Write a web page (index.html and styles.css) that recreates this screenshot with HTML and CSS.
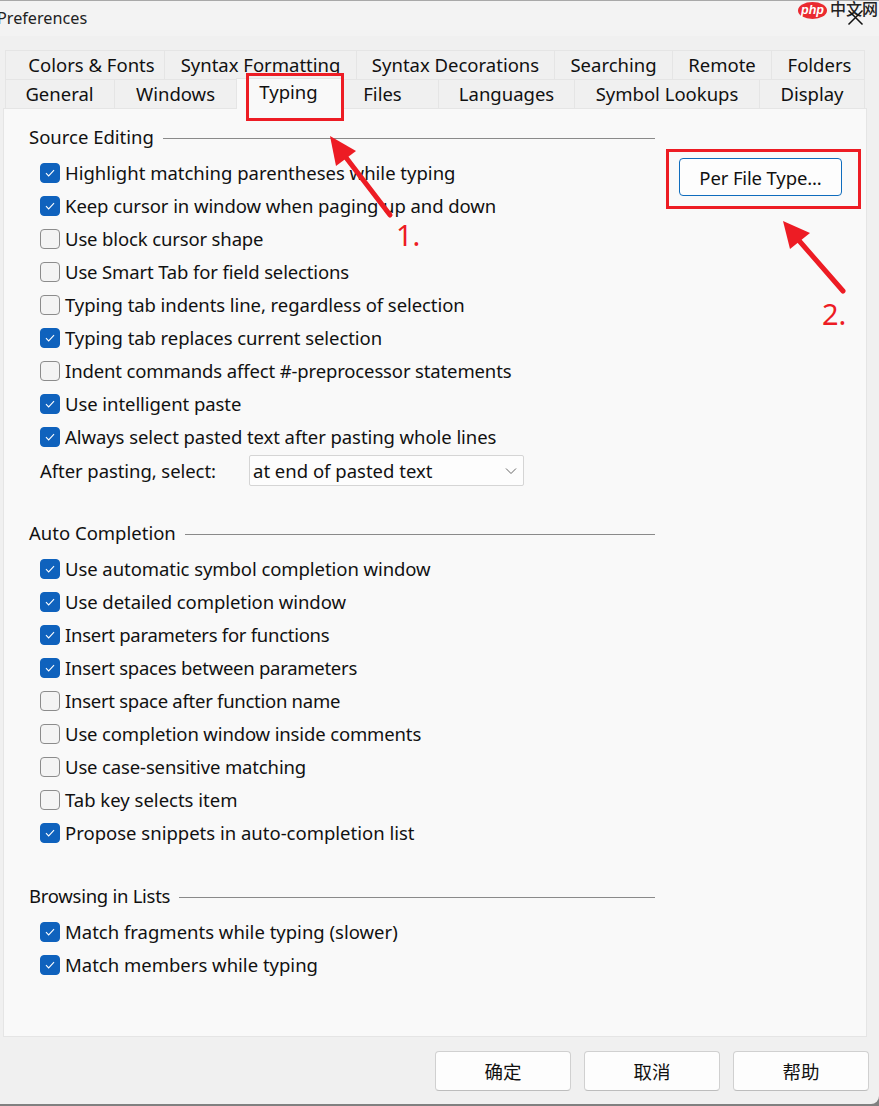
FILE: index.html
```html
<!DOCTYPE html>
<html lang="en">
<head>
<meta charset="utf-8">
<title>Preferences</title>
<link rel="stylesheet" href="styles.css">
</head>
<body>
<div class="window">
  <header class="titlebar"><span class="title">Preferences</span></header>
  <div class="tabs">
    <div class="tab-row">
      <div class="tab w-colors">Colors &amp; Fonts</div>
      <div class="tab w-format">Syntax Formatting</div>
      <div class="tab w-decor">Syntax Decorations</div>
      <div class="tab w-search">Searching</div>
      <div class="tab w-remote">Remote</div>
      <div class="tab w-folders">Folders</div>
    </div>
    <div class="tab-row">
      <div class="tab w-general">General</div>
      <div class="tab w-windows">Windows</div>
      <div class="tab tab-active w-typing">Typing</div>
      <div class="tab w-files">Files</div>
      <div class="tab w-languages">Languages</div>
      <div class="tab w-symbol">Symbol Lookups</div>
      <div class="tab w-display">Display</div>
    </div>
  </div>
  <main class="pane">
    <div class="settings">
      <section class="group">
        <div class="group-head"><span>Source Editing</span><i class="rule"></i></div>
        <label class="row"><span class="box on"><svg viewBox="0 0 20 20"><path d="M5.5 10.2l3 3 6-6.4"/></svg></span>Highlight matching parentheses while typing</label>
        <label class="row ls1"><span class="box on"><svg viewBox="0 0 20 20"><path d="M5.5 10.2l3 3 6-6.4"/></svg></span>Keep cursor in window when paging up and down</label>
        <label class="row ls2"><span class="box"></span>Use block cursor shape</label>
        <label class="row ls2"><span class="box"></span>Use Smart Tab for field selections</label>
        <label class="row ls1"><span class="box"></span>Typing tab indents line, regardless of selection</label>
        <label class="row ls1"><span class="box on"><svg viewBox="0 0 20 20"><path d="M5.5 10.2l3 3 6-6.4"/></svg></span>Typing tab replaces current selection</label>
        <label class="row ls2"><span class="box"></span>Indent commands affect #-preprocessor statements</label>
        <label class="row ls1"><span class="box on"><svg viewBox="0 0 20 20"><path d="M5.5 10.2l3 3 6-6.4"/></svg></span>Use intelligent paste</label>
        <label class="row ls1"><span class="box on"><svg viewBox="0 0 20 20"><path d="M5.5 10.2l3 3 6-6.4"/></svg></span>Always select pasted text after pasting whole lines</label>
        <div class="select-row">
          <span class="select-label ls1">After pasting, select:</span>
          <div class="select"><span>at end of pasted text</span><svg viewBox="0 0 12 8"><path d="M1 1.5l5 5 5-5"/></svg></div>
        </div>
      </section>
      <section class="group g-auto">
        <div class="group-head"><span>Auto Completion</span><i class="rule"></i></div>
        <label class="row ls1"><span class="box on"><svg viewBox="0 0 20 20"><path d="M5.5 10.2l3 3 6-6.4"/></svg></span>Use automatic symbol completion window</label>
        <label class="row ls1"><span class="box on"><svg viewBox="0 0 20 20"><path d="M5.5 10.2l3 3 6-6.4"/></svg></span>Use detailed completion window</label>
        <label class="row ls3"><span class="box on"><svg viewBox="0 0 20 20"><path d="M5.5 10.2l3 3 6-6.4"/></svg></span>Insert parameters for functions</label>
        <label class="row ls3"><span class="box on"><svg viewBox="0 0 20 20"><path d="M5.5 10.2l3 3 6-6.4"/></svg></span>Insert spaces between parameters</label>
        <label class="row ls3"><span class="box"></span>Insert space after function name</label>
        <label class="row ls2"><span class="box"></span>Use completion window inside comments</label>
        <label class="row ls2"><span class="box"></span>Use case-sensitive matching</label>
        <label class="row"><span class="box"></span>Tab key selects item</label>
        <label class="row"><span class="box on"><svg viewBox="0 0 20 20"><path d="M5.5 10.2l3 3 6-6.4"/></svg></span>Propose snippets in auto-completion list</label>
      </section>
      <section class="group g-browse">
        <div class="group-head"><span class="ls3">Browsing in Lists</span><i class="rule"></i></div>
        <label class="row"><span class="box on"><svg viewBox="0 0 20 20"><path d="M5.5 10.2l3 3 6-6.4"/></svg></span>Match fragments while typing (slower)</label>
        <label class="row"><span class="box on"><svg viewBox="0 0 20 20"><path d="M5.5 10.2l3 3 6-6.4"/></svg></span>Match members while typing</label>
      </section>
    </div>
    <div class="side"><button class="btn-type">Per File Type...</button></div>
  </main>
  <footer class="footer">
    <button class="btn-foot">确定</button>
    <button class="btn-foot">取消</button>
    <button class="btn-foot">帮助</button>
  </footer>
</div>
<div class="watermark"><span class="wm-php">php</span><span class="wm-cn">中文网</span></div>
<svg class="overlay" viewBox="0 0 879 1106">
  <path class="close" d="M848.5 10.5l14 14M862.5 10.5l-14 14"/>
  <rect class="mark" x="247.5" y="74.5" width="95" height="45"/>
  <rect class="mark" x="667.5" y="150.5" width="192" height="57"/>
  <path class="shaft" d="M390 215L341 151"/>
  <path class="head" d="M330 136l26 15-20 15z"/>
  <path class="shaft" d="M843 291L795 236"/>
  <path class="head" d="M783 221l27 12-20 16z"/>
</svg>
<span class="note n1">1.</span>
<span class="note n2">2.</span>
</body>
</html>
```
FILE: styles.css
```css
* { box-sizing: border-box; }
html, body { margin: 0; padding: 0; }
body {
  width: 879px;
  height: 1106px;
  overflow: hidden;
  position: relative;
  background: #808080;
  font-family: "Noto Sans", "Noto Sans CJK SC", sans-serif;
  font-size: 18.5px;
  color: #111;
}
.ls1 { letter-spacing: -0.07px; }
.ls2 { letter-spacing: -0.14px; }
.ls3 { letter-spacing: -0.27px; }
.window {
  height: 1104px;
  display: flex;
  flex-direction: column;
  background: #f0f0f0;
  border-top: 1px solid #a8a8a8;
  border-bottom-right-radius: 8px;
}
.titlebar {
  height: 35px;
  flex: none;
  background: #f3f3f3;
  display: flex;
  align-items: center;
  overflow: hidden;
}
.title { margin: -2px 0 0 -3px; font-size: 16.2px; color: #222; }
.tabs { height: 72px; flex: none; padding: 14px 0 0 5px; }
.tab-row { display: flex; height: 29px; }
.tab {
  height: 29px;
  background: #f0f0f0;
  border: 1px solid #e5e5e5;
  border-bottom: 0;
  display: flex;
  align-items: center;
  justify-content: center;
  line-height: 1;
  margin-right: -1px;
  white-space: nowrap;
}
.tab-active {
  background: #f9f9f9;
  height: 31px;
  margin-top: -1px;
  padding-bottom: 4px;
  padding-right: 3px;
  position: relative;
  z-index: 2;
}
.w-colors { width: 160px; padding-left: 13px; }
.w-format { width: 193px; }
.w-decor { width: 199px; }
.w-search { width: 119px; }
.w-remote { width: 100px; }
.w-folders { width: 94px; padding-left: 3px; }
.w-general { width: 110px; padding-right: 1px; }
.w-windows { width: 123px; }
.w-typing { width: 108px; }
.w-files { width: 96px; padding-right: 17px; }
.w-languages { width: 137px; }
.w-symbol { width: 186px; }
.w-display { width: 106px; }
.pane {
  flex: none;
  height: 929px;
  margin: 0 12px 0 3px;
  background: #f9f9f9;
  border: 1px solid #e5e5e5;
  display: flex;
  padding: 18px 0 0 25px;
  position: relative;
  z-index: 1;
}
.settings { width: 626px; flex: none; }
.group-head {
  display: flex;
  align-items: center;
  gap: 9px;
  height: 22px;
  margin-bottom: 7px;
}
.group-head span { margin-top: -4px; }
.rule { flex: 1; height: 1px; background: #8a8a8a; }
.row {
  display: flex;
  align-items: center;
  height: 33px;
  margin-left: 11px;
  gap: 5px;
  white-space: nowrap;
}
.box {
  flex: none;
  width: 20px;
  height: 20px;
  border-radius: 4px;
  border: 1px solid #8c8c8c;
  background: #f4f4f4;
}
.box.on { background: #0f62bd; border-color: #0f62bd; }
.box svg { display: block; width: 18px; height: 18px; fill: none; stroke: #fff; stroke-width: 1.2; }
.select-row { display: flex; align-items: center; margin: 2px 0 0 11px; height: 31px; }
.select-label { width: 209px; flex: none; }
.select {
  width: 275px;
  height: 31px;
  background: #fdfdfd;
  border: 1px solid #d5d5d5;
  border-radius: 2px;
  display: flex;
  align-items: center;
  justify-content: space-between;
  padding: 0 5px 0 3px;
}
.select svg { width: 12px; height: 8px; fill: none; stroke: #666; stroke-width: 1; margin-right: 1px; }
.g-auto { margin-top: 37px; }
.g-browse { margin-top: 37px; }
.side { flex: none; padding: 31px 0 0 24px; }
button { font: inherit; color: #111; cursor: default; }
.btn-type {
  width: 163px;
  height: 38px;
  background: #fdfdfd;
  border: 1px solid #0f6cbd;
  border-radius: 4px;
  padding: 0;
  letter-spacing: -0.14px;
}
.footer {
  flex: none;
  height: 67px;
  display: flex;
  justify-content: flex-end;
  gap: 13px;
  padding: 14px 10px 0 0;
}
.btn-foot {
  width: 136px;
  height: 40px;
  background: #fdfdfd;
  border: 1px solid #d0d0d0;
  border-bottom-color: #bdbdbd;
  border-radius: 4px;
  padding: 0;
}
.overlay { position: absolute; left: 0; top: 0; width: 879px; height: 1106px; z-index: 5; pointer-events: none; }
.close { fill: none; stroke: #111; stroke-width: 1.5; }
.mark { fill: none; stroke: #ed1c24; stroke-width: 3; }
.shaft { fill: none; stroke: #ed1c24; stroke-width: 5; stroke-linecap: round; }
.head { fill: #ed1c24; }
.note { position: absolute; z-index: 6; color: #ed1c24; font-size: 29px; line-height: 1; }
.n1 { left: 396px; top: 220px; }
.n2 { left: 822px; top: 299px; }
.watermark { position: absolute; left: 798px; top: 2px; z-index: 4; display: flex; align-items: flex-start; gap: 3px; }
.wm-php {
  width: 29px; height: 17px; border-radius: 50%;
  background: #ea2a30; color: #fff;
  font: italic bold 12.5px/16px "Liberation Sans", sans-serif;
  text-align: center;
}
.wm-cn { font-size: 16px; line-height: 15px; color: #222; font-weight: 500; }
```
